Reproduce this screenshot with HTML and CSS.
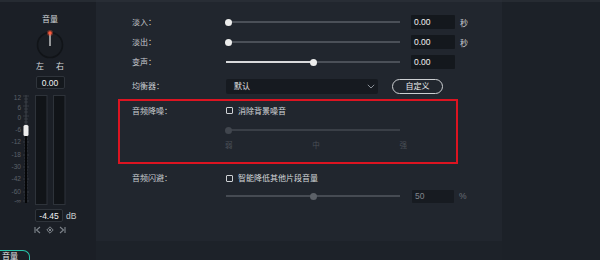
FILE: index.html
```html
<!DOCTYPE html>
<html lang="zh">
<head>
<meta charset="utf-8">
<title>音频</title>
<link rel="stylesheet" href="styles.css">
</head>
<body>
<div class="app">
  <aside class="left">
    <div class="vol-title">音量</div>
    <svg class="knob" width="30" height="30" viewBox="0 0 30 30">
      <circle cx="15" cy="15" r="12.5" fill="#1a1e24" stroke="#111418" stroke-width="1.6"/>
      <line x1="15" y1="3" x2="15" y2="16" stroke="#e8e8e8" stroke-width="1.2"/>
      <circle cx="15" cy="3" r="3" fill="#ff5a3c" opacity="0.35"/>
      <circle cx="15" cy="3" r="1.8" fill="#ff5a3c"/>
    </svg>
    <div class="lr"><span>左</span><span>右</span></div>
    <div class="valbox lbox">0.00</div>
    <svg class="meter" width="92" height="114" viewBox="4 0 92 114">
      <rect x="35.5" y="3.5" width="11.5" height="109" fill="#111418" stroke="#2e333a"/>
      <rect x="53.5" y="3.5" width="11.5" height="109" fill="#111418" stroke="#2e333a"/>
      <g stroke="#3a3f47" stroke-width="0.8">
        <line x1="23" y1="4" x2="29" y2="4"/><line x1="24" y1="7" x2="28" y2="7"/><line x1="24" y1="10" x2="28" y2="10"/>
        <line x1="23" y1="14" x2="29" y2="14"/><line x1="24" y1="17" x2="28" y2="17"/><line x1="24" y1="20" x2="28" y2="20"/>
        <line x1="23" y1="24" x2="29" y2="24"/><line x1="24" y1="27" x2="28" y2="27"/><line x1="24" y1="30" x2="28" y2="30"/><line x1="24" y1="33" x2="28" y2="33"/>
        <line x1="23" y1="38" x2="29" y2="38"/><line x1="24" y1="41" x2="28" y2="41"/><line x1="24" y1="44" x2="28" y2="44"/><line x1="24" y1="47" x2="28" y2="47"/>
        <line x1="23" y1="50" x2="29" y2="50"/><line x1="24" y1="53" x2="28" y2="53"/><line x1="24" y1="56" x2="28" y2="56"/><line x1="24" y1="59" x2="28" y2="59"/>
        <line x1="23" y1="63" x2="29" y2="63"/><line x1="24" y1="66" x2="28" y2="66"/><line x1="24" y1="69" x2="28" y2="69"/><line x1="24" y1="72" x2="28" y2="72"/>
        <line x1="23" y1="75" x2="29" y2="75"/><line x1="24" y1="78" x2="28" y2="78"/><line x1="24" y1="81" x2="28" y2="81"/><line x1="24" y1="84" x2="28" y2="84"/>
        <line x1="23" y1="87" x2="29" y2="87"/><line x1="24" y1="90" x2="28" y2="90"/><line x1="24" y1="93" x2="28" y2="93"/><line x1="24" y1="96" x2="28" y2="96"/>
        <line x1="23" y1="100" x2="29" y2="100"/><line x1="24" y1="103" x2="28" y2="103"/><line x1="24" y1="106" x2="28" y2="106"/>
        <line x1="23" y1="109" x2="29" y2="109"/>
      </g>
      <line x1="26" y1="3" x2="26" y2="34" stroke="#3f444b" stroke-width="1"/>
      <line x1="26" y1="38" x2="26" y2="111" stroke="#050607" stroke-width="2"/>
      <rect x="23.5" y="33" width="5" height="11" rx="1.5" fill="#ececec"/>
      <g class="scale" font-size="6.5" fill="#5b6169" text-anchor="end">
        <text x="21" y="8.3">12</text>
        <text x="21" y="18.3">6</text>
        <text x="21" y="28.3">0</text>
        <text x="21" y="40.3">-6</text>
        <text x="21" y="52.3">-12</text>
        <text x="21" y="65.3">-18</text>
        <text x="21" y="77.3">-30</text>
        <text x="21" y="89.3">-42</text>
        <text x="21" y="102.3">-60</text>
        <text x="21" y="111.3">-∞</text>
      </g>
    </svg>
    <div class="db-row"><div class="valbox lbox db-box">-4.45</div><span class="db">dB</span></div>
    <div class="icons">
      <svg width="7" height="8" viewBox="0 0 7 8"><path d="M1 1V7M6 1L2.5 4L6 7" fill="none" stroke="#7f858c" stroke-width="1.1"/></svg>
      <svg width="8" height="8" viewBox="0 0 8 8"><path d="M4 0.8L7.2 4L4 7.2L0.8 4Z" fill="none" stroke="#7f858c" stroke-width="1"/><circle cx="4" cy="4" r="1.2" fill="#7f858c"/></svg>
      <svg width="7" height="8" viewBox="0 0 7 8"><path d="M6 1V7M1 1L4.5 4L1 7" fill="none" stroke="#7f858c" stroke-width="1.1"/></svg>
    </div>
    <div class="tab">音量</div>
  </aside>

  <section class="center">
    <div class="main">
      <div class="row">
        <div class="label">淡入：</div>
        <div class="slider"><span class="thumb" style="left:2px"></span></div>
        <div class="valbox mbox">0.00</div>
        <span class="unit">秒</span>
      </div>
      <div class="row">
        <div class="label">淡出：</div>
        <div class="slider"><span class="thumb" style="left:2px"></span></div>
        <div class="valbox mbox">0.00</div>
        <span class="unit">秒</span>
      </div>
      <div class="row">
        <div class="label">变声：</div>
        <div class="slider"><span class="fill" style="width:87px"></span><span class="thumb" style="left:87px"></span></div>
        <div class="valbox mbox">0.00</div>
      </div>
      <div class="row eq-row">
        <div class="label">均衡器：</div>
        <div class="dropdown">
          <span>默认</span>
          <svg width="8" height="5" viewBox="0 0 8 5"><path d="M0.8 0.8L4 4L7.2 0.8" fill="none" stroke="#8a9098" stroke-width="1"/></svg>
        </div>
        <div class="btn">自定义</div>
      </div>

      <div class="denoise">
        <div class="row row-a">
          <div class="label">音频降噪：</div>
          <span class="check"></span>
          <span class="ctext">消除背景噪音</span>
        </div>
        <div class="row">
          <div class="label"></div>
          <div class="slider dim"><span class="thumb dthumb" style="left:2px"></span></div>
        </div>
        <div class="levels"><span>弱</span><span>中</span><span>强</span></div>
      </div>

      <div class="row duck-row">
        <div class="label">音频闪避：</div>
        <span class="check"></span>
        <span class="ctext">智能降低其他片段音量</span>
      </div>
      <div class="row row-b">
        <div class="label"></div>
        <div class="slider mid"><span class="thumb mthumb" style="left:87px"></span></div>
        <div class="valbox mbox pbox">50</div>
        <span class="unit punit">%</span>
      </div>
    </div>
  </section>

  <div class="right"></div>
</div>
</body>
</html>
```
FILE: styles.css
```css
* { box-sizing: border-box; }
html, body { margin: 0; padding: 0; }
body {
  width: 600px;
  height: 260px;
  overflow: hidden;
  background: #1c2128;
  font-family: "Noto Sans CJK SC", "Noto Sans", sans-serif;
  font-size: 8px;
  color: #c8cbcf;
}
.app {
  display: flex;
  width: 600px;
  height: 260px;
}

/* left volume panel */
.left {
  width: 96px;
  height: 260px;
  flex: none;
  background: #1b1f26;
  border-top: 2px solid #262b32;
  padding: 12px 0 0 4px;
  display: flex;
  flex-direction: column;
  align-items: center;
  overflow: hidden;
}
.vol-title {
  height: 10px;
  line-height: 10px;
  color: #d4d6d9;
}
.knob { margin-top: 6px; display: block; }
.lr {
  display: flex;
  gap: 12px;
  height: 12px;
  line-height: 12px;
  color: #d4d6d9;
}
.valbox {
  font-family: "Liberation Sans", Arial, sans-serif;
  font-size: 8.5px;
  color: #f0f0f0;
  background: #14181d;
  display: flex;
  align-items: center;
}
.lbox {
  margin-top: 4px;
  width: 29px;
  height: 13px;
  border: 1px solid #2f343b;
  border-radius: 2px;
  justify-content: center;
}
.meter { display: block; margin-top: 3px; }
.scale { font-family: "Liberation Sans", Arial, sans-serif; }
.db-row {
  align-self: flex-start;
  margin-left: 31px;
  margin-top: 3px;
  display: flex;
  align-items: center;
  gap: 3px;
}
.db-box { margin-top: 0; width: 28px; }
.db {
  font-family: "Liberation Sans", Arial, sans-serif;
  font-size: 8.5px;
  color: #c8cbcf;
}
.icons {
  margin-top: 4px;
  display: flex;
  gap: 5px;
  align-items: center;
}
.icons svg { display: block; }
.tab {
  margin-top: auto;
  align-self: flex-start;
  margin-left: -8px;
  width: 34px;
  height: 10px;
  border: 1.5px solid #27c1a7;
  border-bottom: none;
  border-left: none;
  border-radius: 0 7px 0 0;
  padding-left: 6px;
  line-height: 10px;
  color: #e6e6e6;
}

/* center column */
.center {
  width: 406px;
  flex: none;
  background: #1d2229;
}
.main {
  height: 241px;
  background: #21262e;
  border-top: 2px solid #282d35;
  padding: 10px 0 0 36px;
}
.row {
  display: flex;
  align-items: center;
  height: 20px;
}
.label {
  width: 94px;
  flex: none;
  color: #c9ccd0;
  line-height: 10px;
}
.slider {
  position: relative;
  width: 174px;
  height: 2px;
  background: #4b5058;
  flex: none;
}
.fill {
  position: absolute;
  left: 0;
  top: 0;
  height: 2px;
  background: #d8d9db;
}
.thumb {
  position: absolute;
  top: 50%;
  width: 7px;
  height: 7px;
  margin: -3.5px 0 0 -3.5px;
  border-radius: 50%;
  background: #ececec;
}
.mbox {
  margin-left: 11px;
  width: 44px;
  height: 14px;
  padding-left: 3px;
  border-radius: 1px;
}
.unit {
  margin-left: 5px;
  color: #c9ccd0;
}
.eq-row { margin-top: 4px; }
.dropdown {
  width: 152px;
  height: 15px;
  background: #161a20;
  border-radius: 2px;
  display: flex;
  align-items: center;
  justify-content: space-between;
  padding: 0 3px 0 8px;
  color: #e2e4e6;
  line-height: 10px;
}
.dropdown svg { display: block; }
.btn {
  margin-left: 14px;
  width: 51px;
  height: 15px;
  border: 1.5px solid #cdd0d3;
  border-radius: 8px;
  display: flex;
  align-items: center;
  justify-content: center;
  color: #eceeef;
  line-height: 10px;
}

/* noise reduction box */
.denoise {
  margin: 3px 0 0 -14px;
  width: 340px;
  border: 2px solid #dc1421;
  padding: 0 0 12px 12px;
}
.row-a { height: 19px; }
.check {
  width: 7px;
  height: 7px;
  border: 1px solid #cfd2d5;
  border-radius: 1px;
  flex: none;
}
.ctext {
  margin-left: 5px;
  color: #d4d7da;
  line-height: 10px;
}
.dim { background: #3a3f47; }
.dthumb { background: #41464e; }
.levels {
  margin-left: 93px;
  width: 182px;
  height: 10px;
  line-height: 10px;
  display: flex;
  justify-content: space-between;
  color: #4a4f57;
  font-size: 7.5px;
}

/* ducking */
.duck-row { margin-top: 4px; }
.row-b { height: 16px; }
.mid { background: #464b53; }
.mthumb { background: #5c6168; }
.pbox {
  margin-left: 12px;
  width: 42px;
  height: 13px;
  color: #80858c;
  background: #171b21;
}
.punit { color: #6a6f76; font-family: "Liberation Sans", Arial, sans-serif; font-size: 8.5px; }

.right {
  flex: 1;
  background: #1c2128;
  border-top: 2px solid #262b32;
}
```
